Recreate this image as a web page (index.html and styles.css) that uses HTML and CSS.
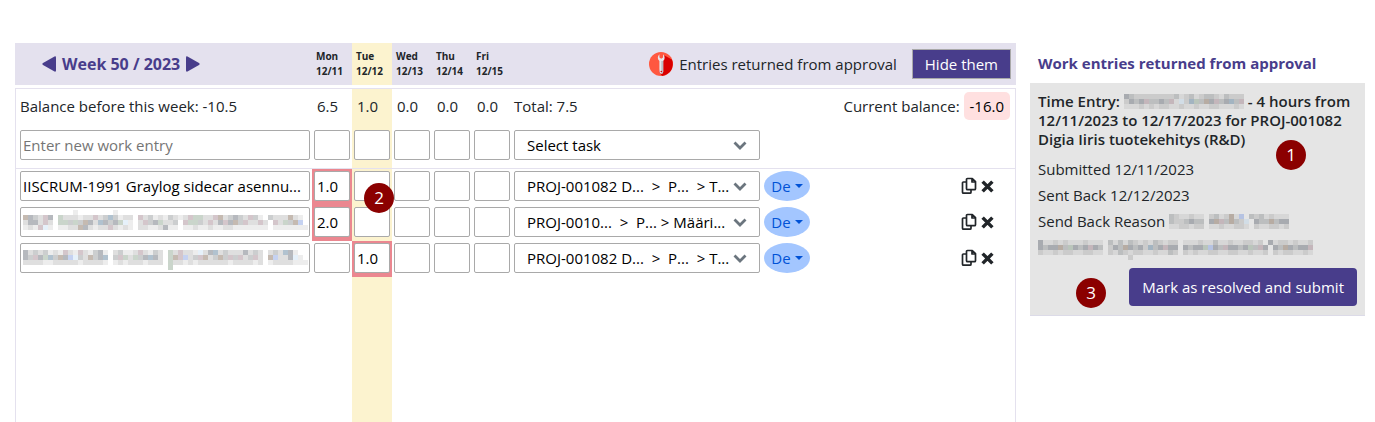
FILE: index.html
```
<!DOCTYPE html>
<html lang="en">
<head>
<meta charset="utf-8">
<title>Work entries</title>
<link rel="stylesheet" href="styles.css">
</head>
<body>
<svg class="sprite" aria-hidden="true">
  <symbol id="chevron" viewBox="0 0 14 9"><path d="M1.500 1.500 7 7l5.500-5.500" fill="none" stroke="#6b757e" stroke-width="2.800"/></symbol>
  <symbol id="copy" viewBox="0 0 16 18"><path d="M6.500 1.500h4.800l3.200 3.200v7q0 1-1 1h-7q-1 0-1-1v-9.200q0-1 1-1zM11 1.500v3.500h3.500M5 5H2.500q-1 0-1 1v9.200q0 1 1 1h6.500q1 0 1-1V13" fill="none" stroke="#212529" stroke-width="1.700" stroke-linejoin="round"/></symbol>
  <symbol id="cross" viewBox="0 0 12 12"><path d="M1.500 1.500l9 9M10.500 1.500l-9 9" stroke="#212529" stroke-width="3.200"/></symbol>
</svg>
<div class="page">
  <main class="sheet">
    <header class="head grid">
      <div class="week">
        <button class="arrow" type="button" aria-label="Previous week"><svg width="14" height="16" viewBox="0 0 14 16"><path d="M12.500.4q1.500-.6 1.500 1v13.200q0 1.600-1.500 1L1 9Q-.3 8 1 7z"/></svg></button>
        <h1>Week 50 / 2023</h1>
        <button class="arrow" type="button" aria-label="Next week"><svg width="14" height="16" viewBox="0 0 14 16"><path d="M1.500.4Q0-.2 0 1.400v13.200q0 1.600 1.500 1L13 9q1.300-1 0-2z"/></svg></button>
      </div>
      <div class="date">Mon<br>12/11</div>
      <div class="date today">Tue<br>12/12</div>
      <div class="date">Wed<br>12/13</div>
      <div class="date">Thu<br>12/14</div>
      <div class="date">Fri<br>12/15</div>
      <div class="notice">
        <svg width="24" height="24" viewBox="0 0 24 24" aria-hidden="true"><circle cx="12" cy="12" r="12" fill="#ff5840"/><path d="M15.500 3.500l7.400 4a12 12 0 0 1-9.800 16.400L10 20z" fill="#d90000"/><path d="M10.400 2.200v3.300l1.800 1.200 1.800-1.200V2.200q3.200 3.600.2 6.800v10.800q0 2-1.900 2t-1.900-2V9q-3.200-3.200 0-6.800z" fill="#e6e6ea"/><path d="M12.300 9h1.900v10.800q0 2-1.900 2z" fill="#b9bdc4"/><circle cx="12.300" cy="19.500" r=".8" fill="#d90000"/></svg>
        <span>Entries returned from approval</span>
        <button class="hide" type="button">Hide them</button>
      </div>
    </header>
    <div class="body">
      <div class="grid balance">
        <div class="name">Balance before this week: -10.5</div>
        <div class="sum">6.5</div><div class="sum today">1.0</div><div class="sum">0.0</div><div class="sum">0.0</div><div class="sum">0.0</div>
        <div class="total">Total: 7.5</div>
        <div class="current">Current balance: <span class="badge">-16.0</span></div>
      </div>
      <div class="grid new">
        <div class="name"><input type="text" placeholder="Enter new work entry" aria-label="New work entry"></div>
        <div class="day"><input type="text" aria-label="Monday"></div><div class="day today"><input type="text" aria-label="Tuesday"></div><div class="day"><input type="text" aria-label="Wednesday"></div><div class="day"><input type="text" aria-label="Thursday"></div><div class="day"><input type="text" aria-label="Friday"></div>
        <div class="task"><select aria-label="Task"><option>Select task</option></select><svg class="chev"><use href="#chevron"/></svg></div>
      </div>
      <div class="grid entry">
        <div class="name"><input type="text" value="IISCRUM-1991 Graylog sidecar asennu..." aria-label="Work entry"></div>
        <div class="day returned"><input type="text" value="1.0" aria-label="Monday"></div><div class="day today"><input type="text" aria-label="Tuesday"><span class="marker m2">2</span></div><div class="day"><input type="text" aria-label="Wednesday"></div><div class="day"><input type="text" aria-label="Thursday"></div><div class="day"><input type="text" aria-label="Friday"></div>
        <div class="task"><select aria-label="Task"><option>PROJ-001082 D...&nbsp; &gt;&nbsp; P...&nbsp; &gt; T...</option></select><svg class="chev"><use href="#chevron"/></svg></div>
        <div class="kind"><button class="pill" type="button">De</button></div>
        <div class="actions"><button type="button" aria-label="Copy"><svg width="16" height="18"><use href="#copy"/></svg></button><button type="button" aria-label="Delete"><svg width="13" height="13"><use href="#cross"/></svg></button></div>
      </div>
      <div class="grid entry">
        <div class="name"><input type="text" aria-label="Work entry"><svg class="mosaic over" data-rows="..........a.......a......................................|hdcbed.fbbbabbebcgcabb.ebcabacbabeffbbehbcdcbeca.cbbbhba|bddbeb.ffcfchdbgdcdfia.becdfbbc.effcbebdedhcebbeb.ebfchj|abaeia.aabbhdbabbebaba.bbaabdaa.aabaabaabbaaaaaaa.aaaaaaa"></svg></div>
        <div class="day returned"><input type="text" value="2.0" aria-label="Monday"></div><div class="day today"><input type="text" aria-label="Tuesday"></div><div class="day"><input type="text" aria-label="Wednesday"></div><div class="day"><input type="text" aria-label="Thursday"></div><div class="day"><input type="text" aria-label="Friday"></div>
        <div class="task"><select aria-label="Task"><option>PROJ-0010...&nbsp; &gt;&nbsp; P... &gt; Määri...</option></select><svg class="chev"><use href="#chevron"/></svg></div>
        <div class="kind"><button class="pill" type="button">De</button></div>
        <div class="actions"><button type="button" aria-label="Copy"><svg width="16" height="18"><use href="#copy"/></svg></button><button type="button" aria-label="Delete"><svg width="13" height="13"><use href="#cross"/></svg></button></div>
      </div>
      <div class="grid entry">
        <div class="name"><input type="text" aria-label="Work entry"><svg class="mosaic over" data-rows="dbcbcabaebaebacda.bcaabebacb.fbebbaibdgbcbbbdbcb.bcbgda|dcedfgchdjicbhcdg.cefbfcdgdb.fhejbcehbchcecebceb.hjbbdia|bbbbaabbbbbabbbba.ababbbabbb.fbbababbbbbbabbbbab.abbbbaaa|.............................f"></svg></div>
        <div class="day"><input type="text" aria-label="Monday"></div><div class="day today returned"><input type="text" value="1.0" aria-label="Tuesday"></div><div class="day"><input type="text" aria-label="Wednesday"></div><div class="day"><input type="text" aria-label="Thursday"></div><div class="day"><input type="text" aria-label="Friday"></div>
        <div class="task"><select aria-label="Task"><option>PROJ-001082 D...&nbsp; &gt;&nbsp; P...&nbsp; &gt; T...</option></select><svg class="chev"><use href="#chevron"/></svg></div>
        <div class="kind"><button class="pill" type="button">De</button></div>
        <div class="actions"><button type="button" aria-label="Copy"><svg width="16" height="18"><use href="#copy"/></svg></button><button type="button" aria-label="Delete"><svg width="13" height="13"><use href="#cross"/></svg></button></div>
      </div>
      <div class="grid rest"><div></div><div></div><div class="today"></div></div>
    </div>
  </main>
  <aside class="side">
    <h2>Work entries returned from approval</h2>
    <section class="card">
      <h3>Time Entry: <svg class="mosaic" data-rows="dcbbbbbbbbcabcabccbacbbb|bdcdeccdceaibgfchdecdgce|aaabababbaabaabaabbaaaba"></svg> - 4 hours from 12/11/2023 to 12/17/2023 for PROJ-001082 Digia Iiris tuotekehitys (R&amp;D)</h3>
      <p>Submitted 12/11/2023</p>
      <p>Sent Back 12/12/2023</p>
      <p>Send Back Reason <svg class="mosaic" data-rows="cbaabaa.bcabhaj.cbcabaaa|cbbcdcc.dhechcbi.dcchcdd|aabbabb.aabaabba.baabbab"></svg><br><svg class="mosaic" data-rows="daababaaabaaa.cacacbabacbabb.aaabaacaabaabbab.dabbabaab|dcddhcfdcdedc.bdchdcdbgcdedd.dcddfjdceddcdfced.dchdcdde|baababbaabbaa.bacbabbaabaacb.babaabbaabbaabaab.babbaaba|..................b"></svg></p>
      <div class="submit"><button type="button">Mark as resolved and submit</button></div>
      <span class="marker m1">1</span>
      <span class="marker m3">3</span>
    </section>
  </aside>
</div>
<script src="mosaic.js"></script>
</body>
</html>
```
FILE: mosaic.js
```
// Fills each redacted strip with a grid of 5px blocks.
const palette = {
  a: "#88888826", b: "#7777773c", c: "#787c8060", d: "#666d787a", e: "#94707c66",
  f: "#728f7660", g: "#5d7f9a7a", h: "#80695575", i: "#9cc8ec40", j: "#7c98e070"
};
document.querySelectorAll(".mosaic").forEach((svg) => {
  const rows = svg.dataset.rows.split("|");
  const width = Math.max(...rows.map((row) => row.length)) * 5;
  svg.setAttribute("width", width);
  svg.setAttribute("height", 15);
  if (svg.classList.contains("over")) svg.setAttribute("height", rows.length * 5);
  rows.forEach((row, y) => [...row].forEach((key, x) => {
    if (!palette[key]) return;
    const block = document.createElementNS("http://www.w3.org/2000/svg", "rect");
    block.setAttribute("x", x * 5);
    block.setAttribute("y", y * 5);
    block.setAttribute("width", 5);
    block.setAttribute("height", 5);
    block.setAttribute("fill", palette[key]);
    svg.append(block);
  }));
});
```
FILE: styles.css
```
* { box-sizing: border-box; }
body, h1, h2, h3, p { margin: 0; }
body { font: 15px/20px "Open Sans", "Noto Sans", sans-serif; color: #212529; background: #fff; }
button, input, select { font: inherit; color: inherit; margin: 0; }
button { border: 0; padding: 0; background: none; cursor: pointer; }
.sprite { position: absolute; width: 0; height: 0; }

.page { display: flex; gap: 14px; min-height: 100vh; padding: 43px 10px 0 15px; }
.sheet { flex: 1; min-width: 0; display: flex; flex-direction: column; gap: 3px; }
.grid { display: grid; grid-template-columns: 296px repeat(5, 40px) 250px 50px 1fr; }
.today { background: #fcf3cf; }

.head { min-height: 42px; background: #e4e1ee; border-left: 1px solid #e4e1ee; }
.week { display: flex; align-items: center; gap: 6px; padding-left: 26px; color: #483d8b; }
.week h1 { font-size: 16px; font-weight: 700; }
.arrow { display: flex; fill: #483d8b; }
.date { padding: 6px 4px; font-size: 10px; line-height: 15px; font-weight: 700; }
.notice { grid-column: 7 / -1; display: flex; align-items: center; justify-content: flex-end; gap: 6px; padding-right: 5px; white-space: nowrap; }
.hide { height: 30px; margin-left: 9px; padding: 0 12px; border: 1px solid #a9a9a9; background: #483d8b; color: #fff; }

.body { flex: 1; display: flex; flex-direction: column; border: 1px solid #e4e1ee; border-bottom: 0; }
.balance { height: 36px; line-height: 34px; white-space: nowrap; }
.name { position: relative; padding: 0 2px 0 4px; }
.sum { padding-left: 5px; }
.total { padding-left: 2px; }
.current { grid-column: 8 / -1; text-align: right; padding-right: 5px; }
.badge { display: inline-block; padding: 0 6px; line-height: 28px; border-radius: 5px; background: #ffe0e0; color: #000; }

input, select { display: block; width: 100%; height: 30px; border: 1px solid #a9a9a9; border-radius: 2px; padding: 0 2px; background: #fff; color: #000; text-overflow: ellipsis; }
input::placeholder { color: #757575; opacity: 1; }
.day input { padding: 0 2px; }
.new { border-bottom: 1px solid #e4e1ee; }
.new > div { padding-top: 5px; padding-bottom: 8px; }
.entry > div { padding-top: 2px; padding-bottom: 4px; }
.day, .task { position: relative; padding-left: 2px; padding-right: 2px; }
.returned { background: #eb8790; }
.task select { appearance: none; padding: 0 12px; }
.chev { position: absolute; right: 15px; top: 13px; width: 14px; height: 9px; pointer-events: none; }
.new .chev { top: 16px; }
.kind { padding: 0 2px; }
.pill { display: flex; align-items: center; justify-content: center; gap: 4px; width: 46px; height: 30px; border-radius: 50%; background: #a3c6ff; color: #0052d6; }
.pill::after { content: ""; border: 4px solid transparent; border-top-color: #0052d6; border-bottom: 0; }
.actions { display: flex; align-items: center; justify-content: flex-end; gap: 4px; padding-right: 21px; }
.actions button, .actions svg { display: block; }
.over { position: absolute; left: 7px; top: 9px; pointer-events: none; }
.over[data-rows^="."] { top: 5px; }
.rest { flex: 1; }

.side { width: 335px; }
.side h2 { padding: 10px 8px; font-size: 15px; line-height: 20px; font-weight: 700; color: #483d8b; }
.card { position: relative; padding: 9px 8px; background: #e5e5e5; border-bottom: 1px solid #dcdbe8; }
.card h3 { font-size: 15px; line-height: 19px; font-weight: 600; margin-bottom: 7px; }
.card p { line-height: 26px; }
.card .mosaic { vertical-align: -2px; overflow: visible; }
.submit { display: flex; justify-content: flex-end; margin-top: 8px; }
.submit button { height: 38px; padding: 0 13px; border-radius: 4px; background: #483d8b; color: #fff; }

.marker { position: absolute; z-index: 1; width: 30px; height: 30px; border-radius: 50%; background: #8b0000; color: #fff; font-size: 17px; line-height: 30px; text-align: center; }
.m1 { left: 246px; top: 57px; }
.m2 { left: 12px; top: 14px; }
.m3 { left: 46px; bottom: 7px; }
```
